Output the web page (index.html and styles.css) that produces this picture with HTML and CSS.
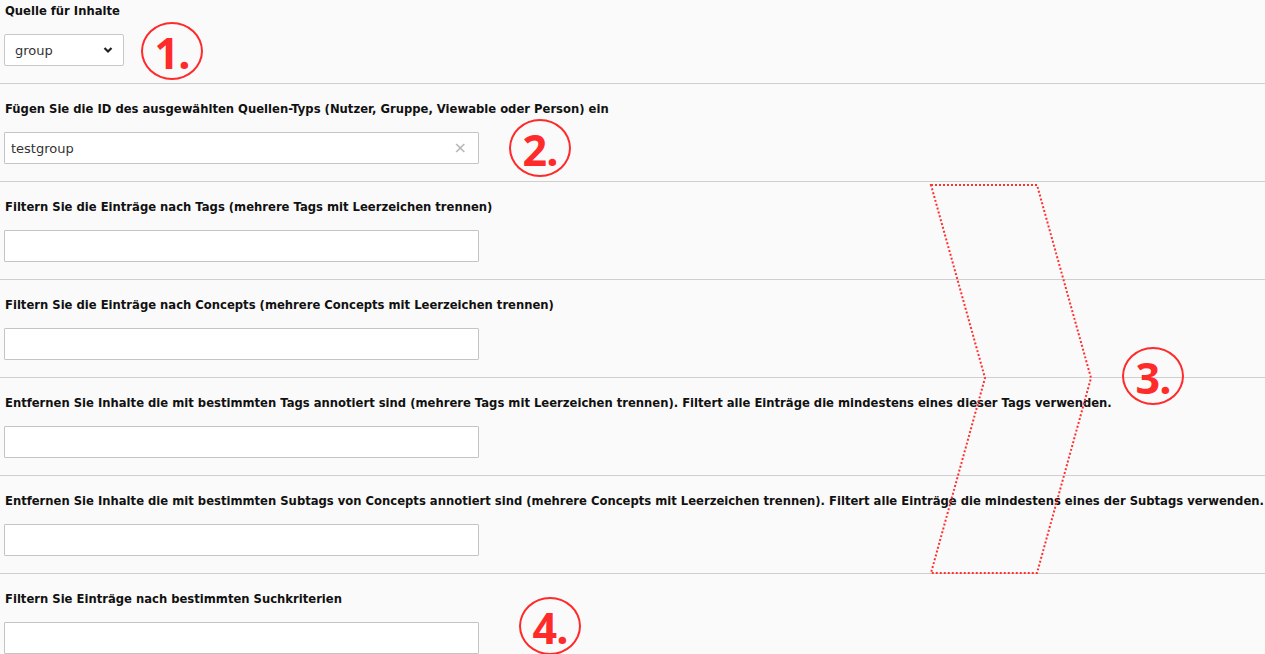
FILE: index.html
```html
<!DOCTYPE html>
<html lang="de">
<head>
<meta charset="utf-8">
<title>Quelle für Inhalte</title>
<link rel="stylesheet" href="styles.css">
</head>
<body>
<div class="form">
  <div class="row first">
    <label class="lbl">Quelle für Inhalte</label>
    <div class="select">
      <span class="select-val">group</span>
      <svg class="caret" width="10" height="8" viewBox="0 0 10 8"><path d="M1.5 2 L5 5.5 L8.5 2" fill="none" stroke="#222" stroke-width="2.2"/></svg>
    </div>
  </div>
  <div class="row">
    <label class="lbl">Fügen Sie die ID des ausgewählten Quellen-Typs (Nutzer, Gruppe, Viewable oder Person) ein</label>
    <div class="field"><span class="field-val">testgroup</span><span class="clear">×</span></div>
  </div>
  <div class="row">
    <label class="lbl">Filtern Sie die Einträge nach Tags (mehrere Tags mit Leerzeichen trennen)</label>
    <div class="field"></div>
  </div>
  <div class="row">
    <label class="lbl">Filtern Sie die Einträge nach Concepts (mehrere Concepts mit Leerzeichen trennen)</label>
    <div class="field"></div>
  </div>
  <div class="row">
    <label class="lbl">Entfernen Sie Inhalte die mit bestimmten Tags annotiert sind (mehrere Tags mit Leerzeichen trennen). Filtert alle Einträge die mindestens eines dieser Tags verwenden.</label>
    <div class="field"></div>
  </div>
  <div class="row">
    <label class="lbl">Entfernen Sie Inhalte die mit bestimmten Subtags von Concepts annotiert sind (mehrere Concepts mit Leerzeichen trennen). Filtert alle Einträge die mindestens eines der Subtags verwenden.</label>
    <div class="field"></div>
  </div>
  <div class="row last">
    <label class="lbl">Filtern Sie Einträge nach bestimmten Suchkriterien</label>
    <div class="field"></div>
  </div>
</div>

<svg class="chevron" width="1265" height="654" viewBox="0 0 1265 654">
  <polygon points="931,185 1037,185 1091,378 1037,573 931,573 985,378" fill="none" stroke="#ff3030" stroke-width="2" stroke-dasharray="2 2"/>
</svg>
<div class="mark m1">1.</div>
<div class="mark m2">2.</div>
<div class="mark m3">3.</div>
<div class="mark m4">4.</div>
</body>
</html>
```
FILE: styles.css
```css
html, body {
  margin: 0;
  padding: 0;
  background: #fafafa;
}
body {
  position: relative;
  width: 1265px;
  height: 654px;
  overflow: hidden;
  font-family: "DejaVu Sans", Verdana, sans-serif;
  color: #111;
}
.form {
  display: flex;
  flex-direction: column;
}
.row {
  display: flex;
  flex-direction: column;
  align-items: flex-start;
  padding: 17px 0 17px 4px;
  border-bottom: 1px solid #cfcfcf;
}
.row.first {
  padding-top: 3px;
}
.row.last {
  border-bottom: none;
}
.lbl {
  display: block;
  font-weight: bold;
  font-size: 11.6px;
  line-height: 16px;
  margin: 0 0 15px 1px;
  white-space: nowrap;
}
.select {
  box-sizing: border-box;
  width: 120px;
  height: 32px;
  border: 1px solid #c8c8c8;
  border-radius: 2px;
  background: #fff;
  display: flex;
  align-items: center;
  justify-content: space-between;
  padding: 0 10px 0 10px;
}
.select-val {
  font-size: 13px;
  color: #333;
}
.caret {
  display: block;
}
.field {
  box-sizing: border-box;
  width: 475px;
  height: 32px;
  border: 1px solid #c4c4c4;
  border-radius: 1px;
  background: #fff;
  display: flex;
  align-items: center;
  justify-content: space-between;
  padding: 0 11px 0 6px;
}
.field-val {
  font-size: 13px;
  color: #333;
}
.clear {
  font-size: 16px;
  color: #b5b5b5;
  line-height: 1;
}
.chevron {
  position: absolute;
  left: 0;
  top: 0;
  pointer-events: none;
}
.mark {
  position: absolute;
  box-sizing: border-box;
  width: 62px;
  height: 58px;
  border: 2px solid #ff2a2a;
  border-radius: 50%;
  color: #ff2a2a;
  font-family: "Open Sans", sans-serif;
  font-weight: 700;
  font-size: 43px;
  letter-spacing: -1px;
  display: flex;
  align-items: center;
  justify-content: center;
  line-height: 1;
  padding-top: 2px;
}
.m1 { left: 141px; top: 22px; }
.m2 { left: 509px; top: 119px; }
.m3 { left: 1122px; top: 347px; }
.m4 { left: 519px; top: 597px; }
```
